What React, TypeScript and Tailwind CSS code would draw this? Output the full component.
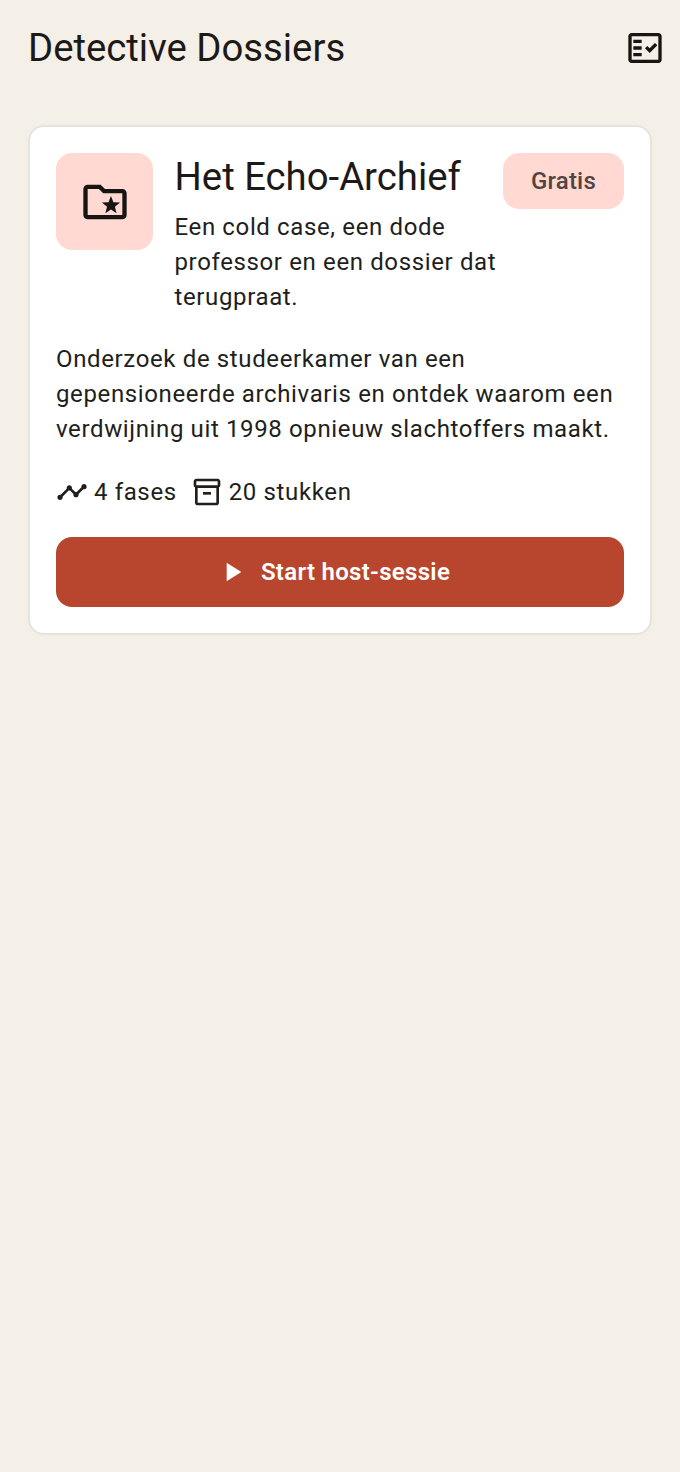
export default function App() {
  return (
    <div className="min-h-[1472px] w-[680px] bg-[#f4efe7] font-['Roboto',sans-serif] text-[#211e1c]">
      <header className="flex h-[96px] items-center justify-between pl-[28px] pr-[15px]">
        <h1 className="text-[38.3px] leading-[48px] font-normal text-[#1c1917]">Detective Dossiers</h1>
        <svg className="h-[40px] w-[40px] text-[#171412]" viewBox="0 0 24 24" fill="currentColor">
          <path d="M20 3H4c-1.1 0-2 .9-2 2v14c0 1.1.9 2 2 2h16c1.1 0 2-.9 2-2V5c0-1.1-.9-2-2-2zm0 16H4V5h16v14z" />
          <path d="M19.41 10.42 17.99 9l-3.17 3.17-1.41-1.42L12 12.16 14.82 15zM5 7h5v2H5zM5 11h5v2H5zM5 15h5v2H5z" />
        </svg>
      </header>
      <div className="px-[28px] pt-[29px]">
        <section className="flex flex-col rounded-[16px] border-2 border-[#e6e3df] bg-white p-[26px]">
          <div className="flex items-start">
            <div className="flex h-[97px] w-[97px] shrink-0 items-center justify-center rounded-[16px] bg-[#ffd9d2]">
              <svg className="h-[52px] w-[52px] text-[#171412]" viewBox="0 0 24 24" fill="currentColor">
                <path d="M20 6h-8l-2-2H4c-1.1 0-2 .9-2 2v12c0 1.1.9 2 2 2h16c1.1 0 2-.9 2-2V8c0-1.1-.9-2-2-2zm0 12H4V6h5.17l2 2H20v10z" />
                <path d="M14.75 9.2 15.87 12.06 18.93 12.24 16.56 14.19 17.34 17.16 14.75 15.5 12.16 17.16 12.94 14.19 10.57 12.24 13.63 12.06z" />
              </svg>
            </div>
            <div className="ml-[21.5px] min-w-0 flex-1">
              <h2 className="text-[38.3px] leading-[48px] font-normal text-[#1c1917]">Het Echo-Archief</h2>
              <p className="mt-[9px] text-[24px] leading-[35px] tracking-[0.63px]">
                Een cold case, een dode professor en een dossier dat terugpraat.
              </p>
            </div>
            <span className="ml-[4px] flex h-[56px] shrink-0 items-center rounded-[16px] bg-[#ffd9d2] px-[28px] text-[24px] tracking-[0.2px] font-medium text-[#54443f]">
              Gratis
            </span>
          </div>
          <p className="mt-[27px] text-[24px] leading-[35px] tracking-[0.63px]">
            Onderzoek de studeerkamer van een gepensioneerde archivaris en ontdek waarom een verdwijning uit 1998 opnieuw slachtoffers maakt.
          </p>
          <div className="mt-[26px] flex h-[38px] items-center text-[24px] tracking-[0.63px]">
            <svg className="h-[32px] w-[32px]" viewBox="0 0 24 24" fill="currentColor">
              <path d="M23 8c0 1.1-.9 2-2 2-.18 0-.35-.02-.51-.07l-3.56 3.55c.05.16.07.34.07.52 0 1.1-.9 2-2 2s-2-.9-2-2c0-.18.02-.36.07-.52l-2.55-2.55c-.16.05-.34.07-.52.07s-.36-.02-.52-.07l-4.55 4.56c.05.16.07.33.07.51 0 1.1-.9 2-2 2s-2-.9-2-2 .9-2 2-2c.18 0 .35.02.51.07l4.56-4.55C8.02 9.36 8 9.18 8 9c0-1.1.9-2 2-2s2 .9 2 2c0 .18-.02.36-.07.52l2.55 2.55c.16-.05.34-.07.52-.07s.36.02.52.07l3.55-3.56C19.02 8.35 19 8.18 19 8c0-1.1.9-2 2-2s2 .9 2 2z" />
            </svg>
            <span className="ml-[6px]">4 fases</span>
            <svg className="ml-[14px] h-[32px] w-[32px]" viewBox="0 0 24 24" fill="currentColor">
              <path d="M20 2H4c-1 0-2 .9-2 2v3.01c0 .72.43 1.34 1 1.69V20c0 1.1 1.1 2 2 2h14c.9 0 2-.9 2-2V8.7c.57-.35 1-.97 1-1.69V4c0-1.1-1-2-2-2zm-1 18H5V9h14v11zm1-13H4V4h16v3z" />
              <path d="M9 12h6v2H9z" />
            </svg>
            <span className="ml-[6px]">20 stukken</span>
          </div>
          <button className="mt-[26px] flex h-[70px] items-center justify-center rounded-[16px] bg-[#b8452d] pr-[14px] text-[24px] tracking-[0.3px] font-semibold text-white">
            <svg className="h-[32px] w-[32px]" viewBox="0 0 24 24" fill="currentColor">
              <path d="M8 5v14l11-7z" />
            </svg>
            <span className="ml-[13px]">Start host-sessie</span>
          </button>
        </section>
      </div>
    </div>
  );
}
